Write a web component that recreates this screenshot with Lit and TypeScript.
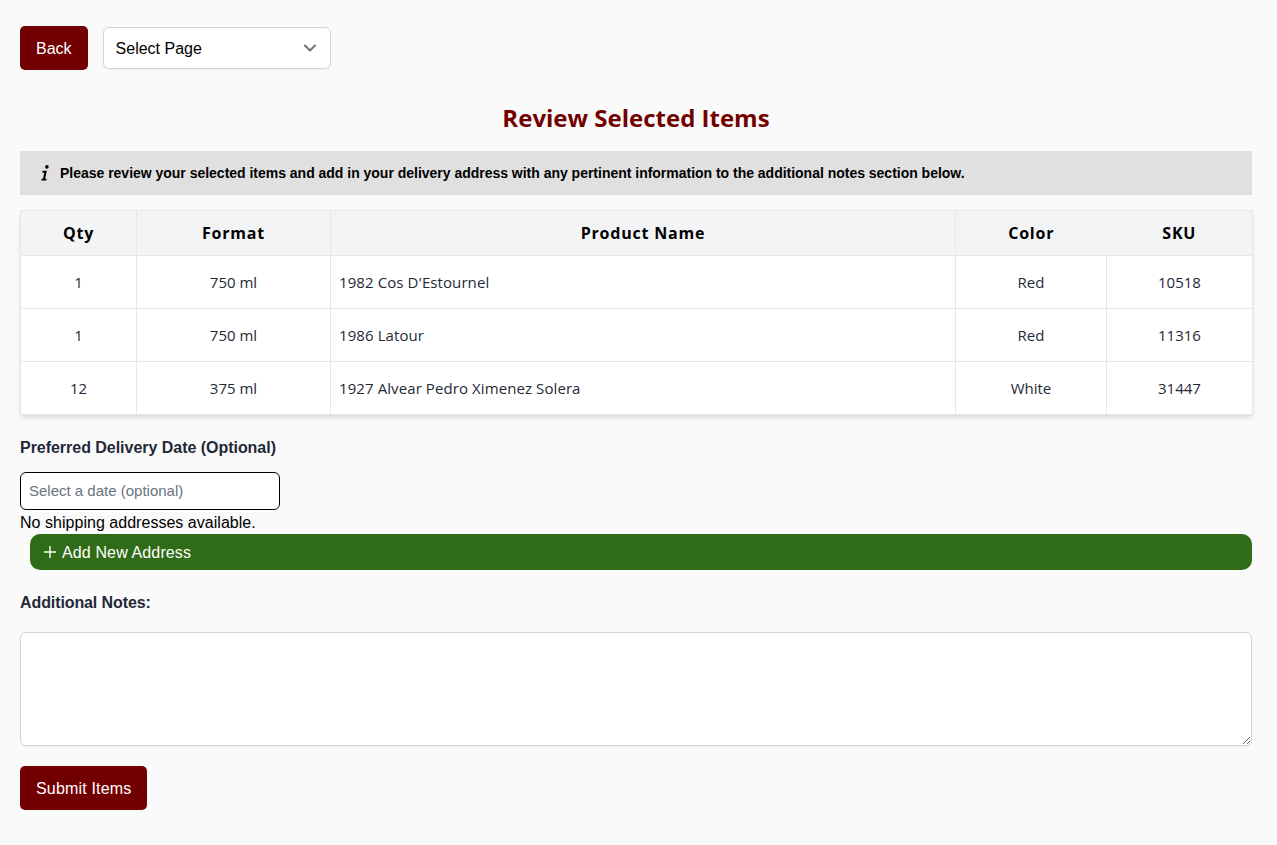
import { LitElement, html, css } from "lit";
import { customElement } from "lit/decorators.js";

const ITEMS = [
  { qty: 1, format: "750 ml", name: "1982 Cos D'Estournel", color: "Red", sku: "10518" },
  { qty: 1, format: "750 ml", name: "1986 Latour", color: "Red", sku: "11316" },
  { qty: 12, format: "375 ml", name: "1927 Alvear Pedro Ximenez Solera", color: "White", sku: "31447" },
];

@customElement("app-root")
export class AppRoot extends LitElement {
  static styles = css`
    :host {
      display: block;
      min-height: 845px;
      box-sizing: border-box;
      padding: 26px 25px 35px 20px;
      background: #fafafa;
      font-family: "Liberation Sans", Arial, sans-serif;
      color: #000;
    }

    * {
      box-sizing: border-box;
    }

    .top-bar {
      display: flex;
      align-items: center;
      gap: 15px;
      height: 44px;
    }

    .btn {
      height: 44px;
      padding: 2px 16px 0;
      border: none;
      border-radius: 5px;
      background: #730000;
      color: #fff;
      font: 16px "Liberation Sans", Arial, sans-serif;
    }

    .page-select {
      display: flex;
      align-items: center;
      justify-content: space-between;
      width: 228px;
      height: 42px;
      padding: 0 10px 0 12px;
      border: 1px solid #d1d5db;
      border-radius: 6px;
      background: #fff;
      box-shadow: 0 1px 2px rgba(0, 0, 0, 0.05);
      font-size: 16px;
    }

    .page-select span {
      padding-top: 2px;
    }

    h1 {
      margin: 31px 0 0;
      height: 33px;
      text-align: center;
      color: #730000;
      font: 700 24px/33px "Open Sans", sans-serif;
    }

    .notice {
      display: flex;
      align-items: center;
      gap: 11px;
      height: 44px;
      margin-top: 17px;
      padding-left: 21px;
      background: #e0e0e0;
      font-size: 14px;
      font-weight: 700;
      letter-spacing: -0.015px;
    }

    .notice svg {
      flex: none;
    }

    table {
      width: 100%;
      margin-top: 15px;
      table-layout: fixed;
      border-collapse: collapse;
      background: #fff;
      box-shadow: 0 4px 6px -1px rgba(0, 0, 0, 0.1), 0 2px 4px -2px rgba(0, 0, 0, 0.1);
      font-family: "Open Sans", sans-serif;
    }

    th,
    td {
      border: 1px solid #e5e7eb;
      text-align: center;
    }

    th {
      height: 45px;
      padding-bottom: 1px;
      background: #f3f4f6;
      font-size: 16px;
      font-weight: 700;
      letter-spacing: 0.05em;
    }

    th.no-right {
      border-right: none;
    }

    th.no-left {
      border-left: none;
    }

    td {
      height: 53px;
      color: #1f2937;
      font-size: 15px;
    }

    td.name {
      padding-left: 8px;
      text-align: left;
      letter-spacing: 0.09px;
    }

    label {
      display: block;
      color: #1f2937;
      font-size: 16px;
      font-weight: 700;
    }

    .date-label {
      margin-top: 24px;
      line-height: 18px;
      letter-spacing: -0.03px;
    }

    .date-input {
      display: block;
      width: 260px;
      height: 38px;
      margin-top: 15px;
      padding: 0 8px 2px;
      border: 1px solid #000;
      border-radius: 6px;
      background: #fff;
      font: 15px "Liberation Sans", Arial, sans-serif;
    }

    .date-input::placeholder {
      color: #6b7280;
      opacity: 1;
    }

    .no-address {
      height: 24px;
      font-size: 16px;
      line-height: 26px;
      letter-spacing: 0.03px;
    }

    .add-address {
      display: flex;
      align-items: center;
      gap: 5px;
      width: calc(100% - 10px);
      height: 36px;
      margin-left: 10px;
      padding: 0 13px;
      border: none;
      border-radius: 10px;
      background: #306b17;
      color: #fff;
      font: 16px "Liberation Sans", Arial, sans-serif;
      letter-spacing: 0.13px;
    }

    .add-address span {
      padding-top: 2px;
    }

    .notes-label {
      margin-top: 24px;
      line-height: 18px;
      letter-spacing: -0.1px;
    }

    textarea {
      display: block;
      width: 100%;
      height: 114px;
      margin-top: 20px;
      border: 1px solid #d1d5db;
      border-radius: 6px;
      background: #fff;
      box-shadow: 0 1px 2px rgba(0, 0, 0, 0.05);
    }

    .submit {
      display: block;
      margin-top: 20px;
      letter-spacing: 0.17px;
    }
  `;

  render() {
    return html`
      <div class="top-bar">
        <button class="btn">Back</button>
        <div class="page-select">
          <span>Select Page</span>
          <svg width="20" height="20" viewBox="0 0 20 20" fill="none" stroke="#6b7280" stroke-width="2" stroke-linecap="round" stroke-linejoin="round">
            <path d="M5 7.5l5 5 5-5" />
          </svg>
        </div>
      </div>

      <h1>Review Selected Items</h1>

      <div class="notice">
        <svg width="8" height="16" viewBox="0 0 8 16" fill="#000">
          <circle cx="5.9" cy="1.9" r="1.8" />
          <path d="M1.7 5.8H5.9L4.1 13.7H5.6L5.3 15.6H.2L.6 13.7H2L3.3 7.7H1.3Z" />
        </svg>
        <span>Please review your selected items and add in your delivery address with any pertinent information to the additional notes section below.</span>
      </div>

      <table>
        <colgroup>
          <col style="width: 116px" />
          <col style="width: 194px" />
          <col style="width: 625px" />
          <col style="width: 151px" />
          <col style="width: 146px" />
        </colgroup>
        <thead>
          <tr>
            <th>Qty</th>
            <th>Format</th>
            <th>Product Name</th>
            <th class="no-right">Color</th>
            <th class="no-left">SKU</th>
          </tr>
        </thead>
        <tbody>
          ${ITEMS.map(
            (item) => html`
              <tr>
                <td>${item.qty}</td>
                <td>${item.format}</td>
                <td class="name">${item.name}</td>
                <td>${item.color}</td>
                <td>${item.sku}</td>
              </tr>
            `
          )}
        </tbody>
      </table>

      <label class="date-label">Preferred Delivery Date (Optional)</label>
      <input class="date-input" type="text" placeholder="Select a date (optional)" />
      <div class="no-address">No shipping addresses available.</div>
      <button class="add-address">
        <svg width="14" height="14" viewBox="0 0 14 14" fill="none" stroke="#fff" stroke-width="1.4">
          <path d="M7 1v12M1 7h12" />
        </svg>
        <span>Add New Address</span>
      </button>

      <label class="notes-label">Additional Notes:</label>
      <textarea></textarea>
      <button class="btn submit">Submit Items</button>
    `;
  }
}
